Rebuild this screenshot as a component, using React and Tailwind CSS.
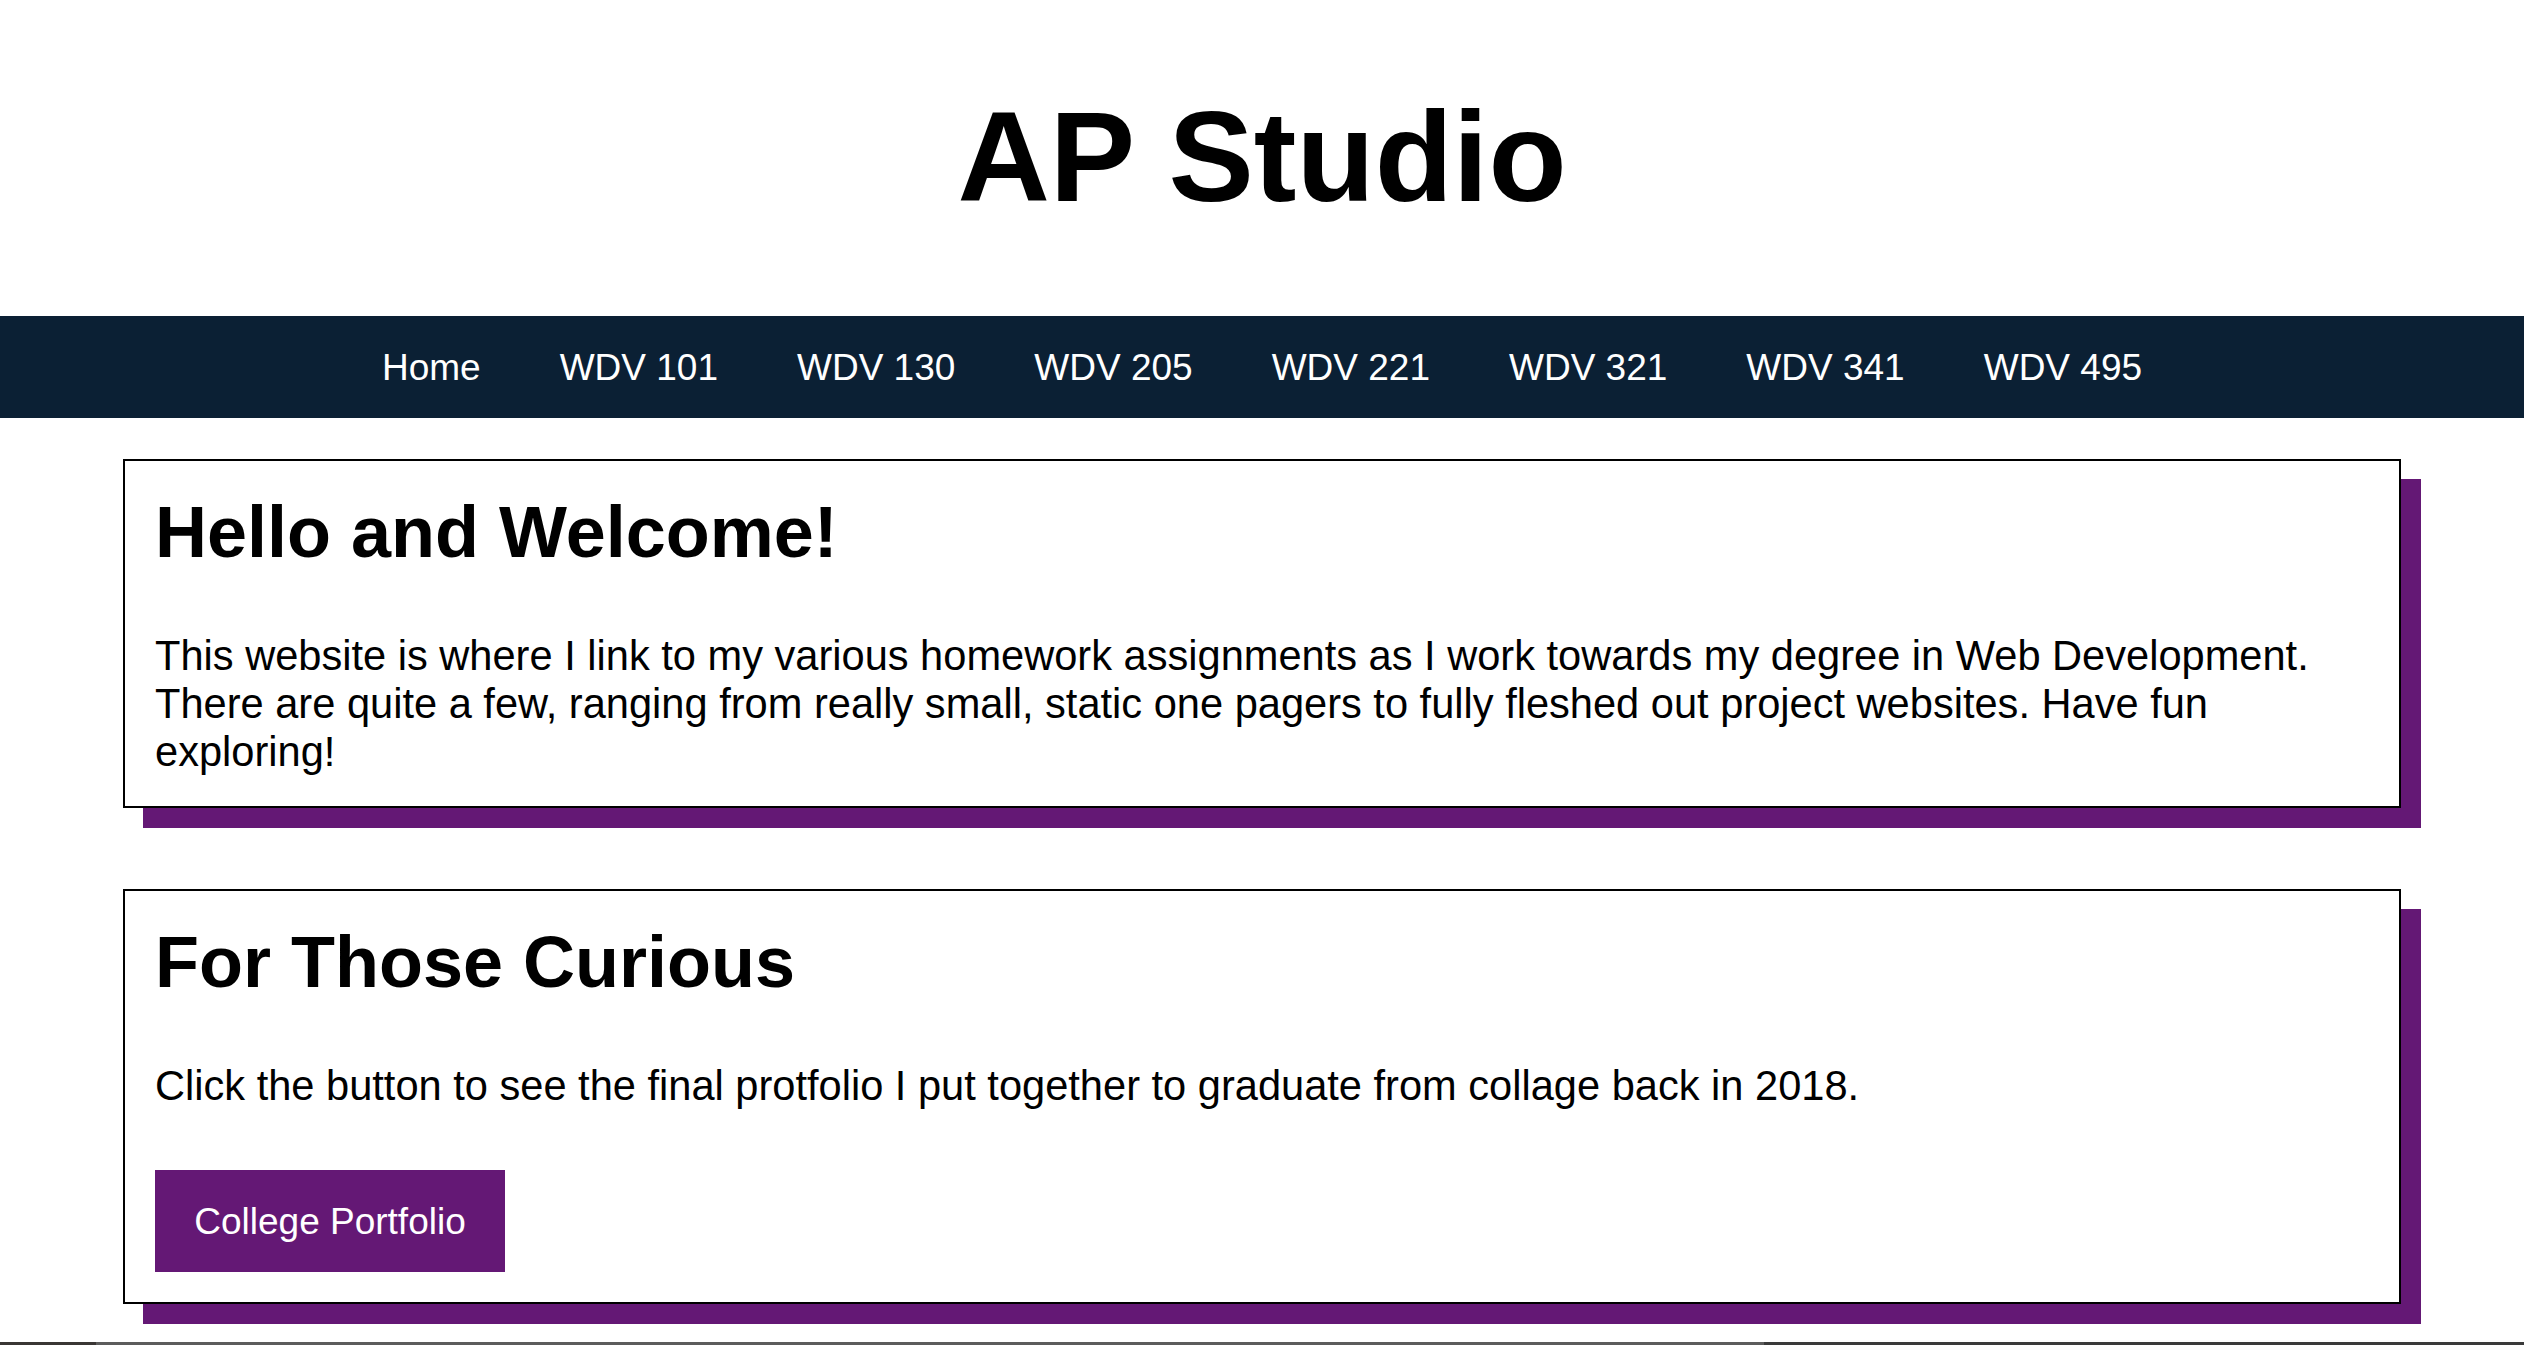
import React from 'react';

const navItems = ['Home', 'WDV 101', 'WDV 130', 'WDV 205', 'WDV 221', 'WDV 321', 'WDV 341', 'WDV 495'];

const Card = ({ title, children }) => (
  <section className="w-[2278px] mx-auto border-2 border-black bg-white p-[30px] shadow-[20px_20px_0_#641875]">
    <h2 className="text-[72px] leading-[83px] font-bold mb-[58px]">{title}</h2>
    {children}
  </section>
);

const App = () => {
  return (
    <div className="min-h-[1345px] flex flex-col bg-white text-black font-['Liberation_Sans',Arial,sans-serif]">
      <header>
        <h1 className="text-center text-[128px] leading-[147px] font-bold mt-[83px] mb-[86px]">AP Studio</h1>
      </header>

      <nav className="h-[102px] bg-[#0b2034] flex items-center justify-center gap-[79px]">
        {navItems.map((item) => (
          <a key={item} href="#" className="text-white text-[37px] leading-[43px]">
            {item}
          </a>
        ))}
      </nav>

      <main className="pt-[41px]">
        <Card title="Hello and Welcome!">
          <p className="text-[41.6px] leading-[48px]">
            This website is where I link to my various homework assignments as I work towards my degree in Web Development. There are quite a few, ranging from really small, static one pagers to fully fleshed out project websites. Have fun exploring!
          </p>
        </Card>

        <div className="mt-[81px]">
          <Card title="For Those Curious">
            <p className="text-[41.6px] leading-[48px] mb-[60px]">
              Click the button to see the final protfolio I put together to graduate from collage back in 2018.
            </p>
            <a
              href="#"
              className="flex items-center justify-center w-[350px] h-[102px] bg-[#641875] text-white text-[37px] leading-[43px]"
            >
              College Portfolio
            </a>
          </Card>
        </div>
      </main>

      <div className="mt-auto flex h-[3px]">
        <div className="w-[96px] bg-[#393634]" />
        <div className="flex-1 bg-[#5c5c5c]" />
        <div className="w-[760px] bg-[#3a3a3a]" />
      </div>
    </div>
  );
};

export default App;
